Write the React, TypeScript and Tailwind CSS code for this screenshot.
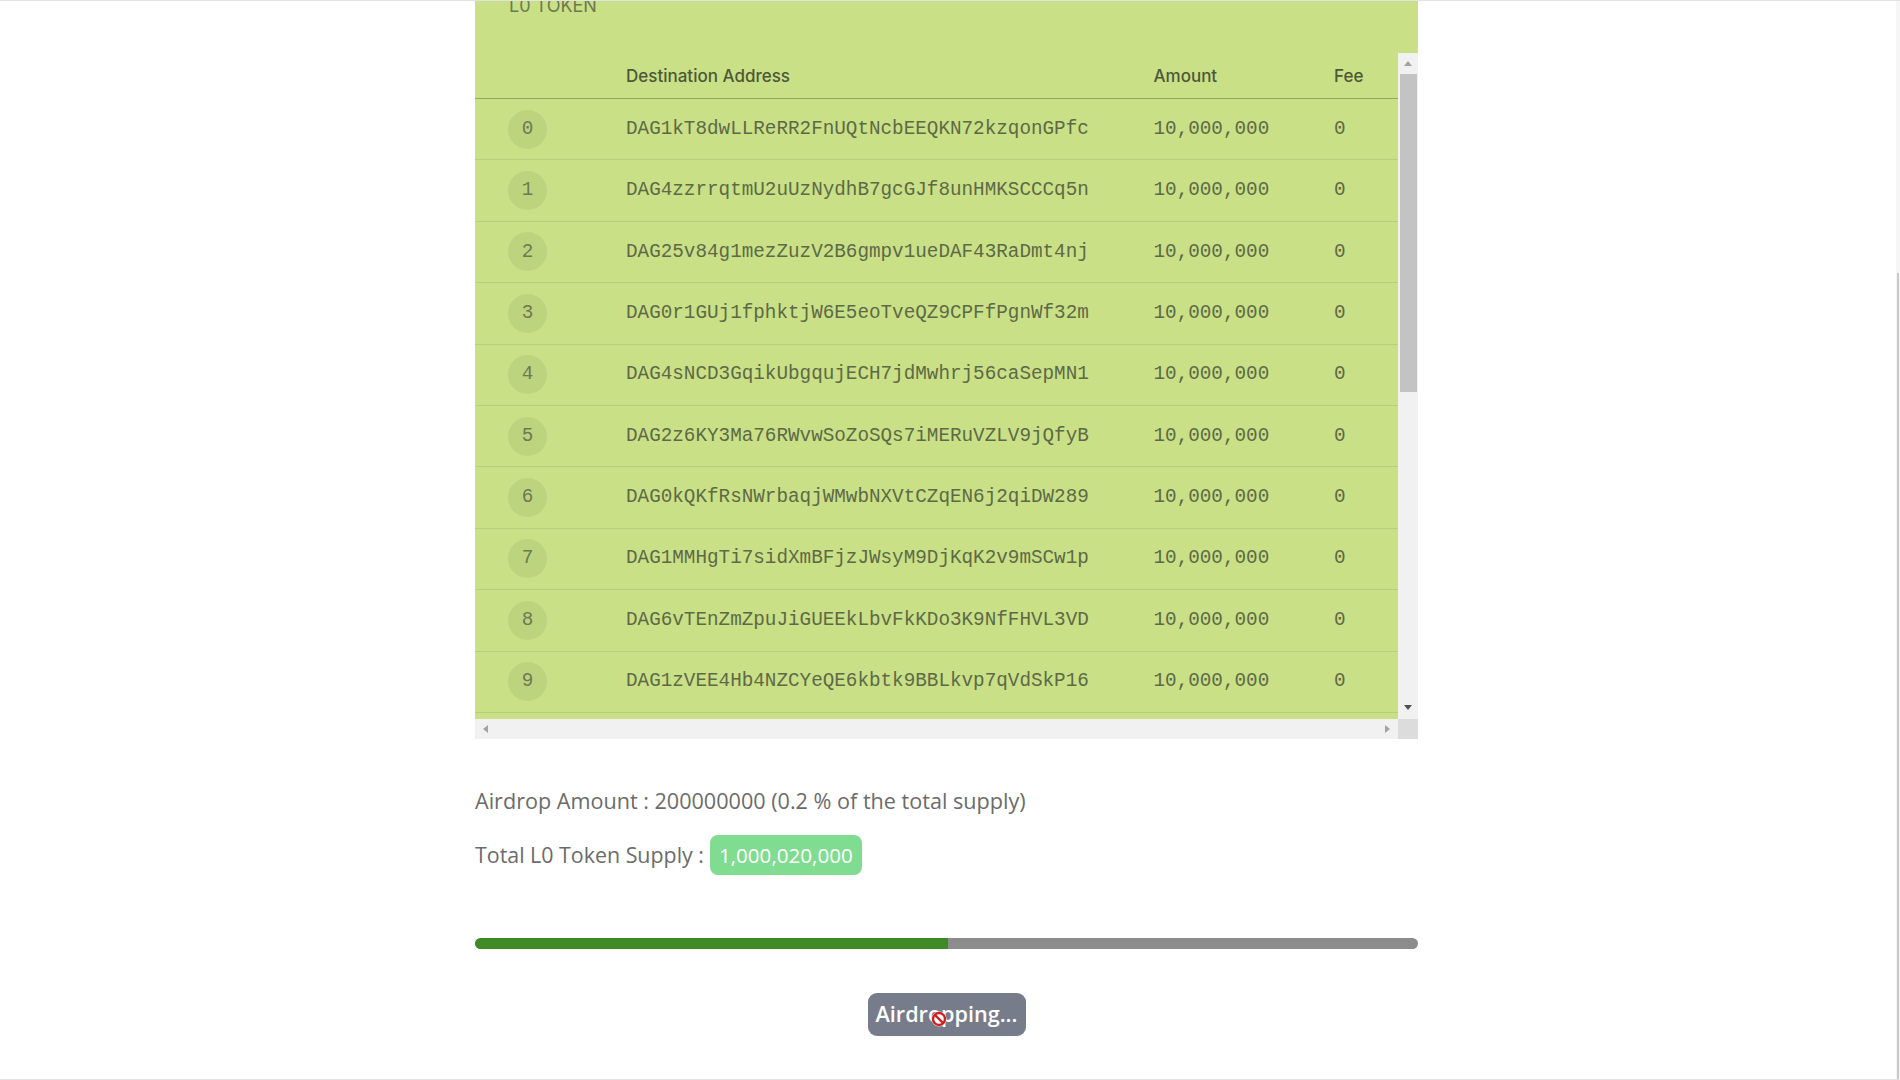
import React from 'react';

const rows: string[] = [
  'DAG1kT8dwLLReRR2FnUQtNcbEEQKN72kzqonGPfc',
  'DAG4zzrrqtmU2uUzNydhB7gcGJf8unHMKSCCCq5n',
  'DAG25v84g1mezZuzV2B6gmpv1ueDAF43RaDmt4nj',
  'DAG0r1GUj1fphktjW6E5eoTveQZ9CPFfPgnWf32m',
  'DAG4sNCD3GqikUbgqujECH7jdMwhrj56caSepMN1',
  'DAG2z6KY3Ma76RWvwSoZoSQs7iMERuVZLV9jQfyB',
  'DAG0kQKfRsNWrbaqjWMwbNXVtCZqEN6j2qiDW289',
  'DAG1MMHgTi7sidXmBFjzJWsyM9DjKqK2v9mSCw1p',
  'DAG6vTEnZmZpuJiGUEEkLbvFkKDo3K9NfFHVL3VD',
  'DAG1zVEE4Hb4NZCYeQE6kbtk9BBLkvp7qVdSkP16',
  'DAG3bQ8xLmP2rTnVw6YcZ4kHsJ9dFgEa1uRoNi7q',
];

const mono = "font-['Liberation_Mono','DejaVu_Sans_Mono',monospace]";
const uiSans = "font-['Open_Sans','Noto_Sans',sans-serif]";

function Arrow({ dir }: { dir: 'up' | 'down' | 'left' | 'right' }) {
  const pts = {
    up: '0,5 4,0 8,5',
    down: '0,0 8,0 4,5',
    left: '5,0 5,8 0,4',
    right: '0,0 0,8 5,4',
  }[dir];
  const horiz = dir === 'left' || dir === 'right';
  return (
    <svg width={horiz ? 5 : 8} height={horiz ? 8 : 5}>
      <polygon points={pts} fill={dir === 'down' ? '#505050' : '#a3a3a3'} />
    </svg>
  );
}

function AddressTable() {
  return (
    <div className="bg-[#c9e087]">
      {/* Title */}
      <div className="h-[72px] pl-[34px] pt-[13px]">
        <div className="text-[18px] leading-[24px] uppercase text-[#6d7a4e] font-['Inter',sans-serif]">L0 Token</div>
      </div>

      <div className="flex h-[666px]">
        <div className="flex-1 overflow-hidden">
          {/* Header */}
          <div className="grid grid-cols-[151px_527.5px_180.5px_1fr] h-[46px] pt-[2px] items-center border-b border-[#8fa963] text-[17px] font-medium text-[#4e5838] font-['Inter',sans-serif]">
            <div />
            <div>Destination Address</div>
            <div>Amount</div>
            <div>Fee</div>
          </div>
          {rows.map((addr, i) => (
            <div
              key={i}
              className={`grid grid-cols-[151px_527.5px_180.5px_1fr] h-[61.4px] items-center border-b border-[#b7cf7b] text-[19.3px] text-[#5e6a46] ${mono}`}
            >
              <div className="pl-[33px]">
                <div className="w-[39px] h-[39px] rounded-full bg-[#bdd47f] flex items-center justify-center text-[#6d7a52]">
                  {i}
                </div>
              </div>
              <div className="whitespace-nowrap">{addr}</div>
              <div>10,000,000</div>
              <div>0</div>
            </div>
          ))}
        </div>

        {/* Vertical scrollbar */}
        <div className="w-[20px] bg-[#f1f1f1] flex flex-col items-center">
          <div className="h-[21px] flex items-center justify-center">
            <Arrow dir="up" />
          </div>
          <div className="w-[17px] h-[318px] bg-[#c3c3c3]" />
          <div className="flex-1" />
          <div className="h-[24px] flex items-center justify-center">
            <Arrow dir="down" />
          </div>
        </div>
      </div>

      {/* Horizontal scrollbar */}
      <div className="flex h-[20px]">
        <div className="flex-1 bg-[#f1f1f1] flex items-center justify-between px-[8px]">
          <Arrow dir="left" />
          <Arrow dir="right" />
        </div>
        <div className="w-[20px] bg-[#dcdcdc]" />
      </div>
    </div>
  );
}

export default function App() {
  return (
    <div className="relative h-[1080px] overflow-hidden bg-white border-t border-b border-[#e2e2e2]">
      <div className="w-[943px] ml-[475px] -mt-[20px]">
        <AddressTable />

        <div className={`${uiSans} text-[#6b6b6b]`}>
          <div className="mt-[48px] text-[21.6px] leading-[28px]">
            Airdrop Amount : 200000000 (0.2 % of the total supply)
          </div>
          <div className="mt-[20px] flex items-center h-[40px]">
            <span className="text-[21.4px] leading-[28px]">Total L0 Token Supply :</span>
            <span className="ml-[6px] h-[40px] px-[9px] rounded-[8px] bg-[#7fdc90] text-white text-[20.6px] font-medium flex items-center">
              1,000,020,000
            </span>
          </div>
        </div>

        {/* Progress */}
        <div className="mt-[63px] h-[11px] rounded-full bg-[#8c8c8c] overflow-hidden">
          <div className="h-full bg-[#3e8a26] rounded-l-full" style={{ width: '50.2%' }} />
        </div>

        <div className="mt-[44px] flex justify-center">
          <div className={`relative w-[158px] h-[43px] rounded-[9px] bg-[#767c8a] text-white text-[21.6px] font-semibold flex items-center justify-center ${uiSans}`}>
            Airdropping...
            {/* not-allowed cursor */}
            <svg className="absolute left-[62px] top-[17px]" width="18" height="18" viewBox="0 0 18 18">
              <circle cx="9" cy="9" r="7.5" fill="white" />
              <circle cx="9" cy="9" r="6" fill="none" stroke="#d11f1f" strokeWidth="2.4" />
              <line x1="5" y1="5" x2="13" y2="13" stroke="#d11f1f" strokeWidth="2.4" />
            </svg>
          </div>
        </div>
      </div>

      {/* page scrollbar */}
      <div className="absolute right-0 top-0 w-[4px] h-full bg-[#f6f6f6]">
        <div className="ml-[1px] mt-[272px] w-[2px] h-[808px] bg-[#c8c8c8]" />
      </div>
    </div>
  );
}
